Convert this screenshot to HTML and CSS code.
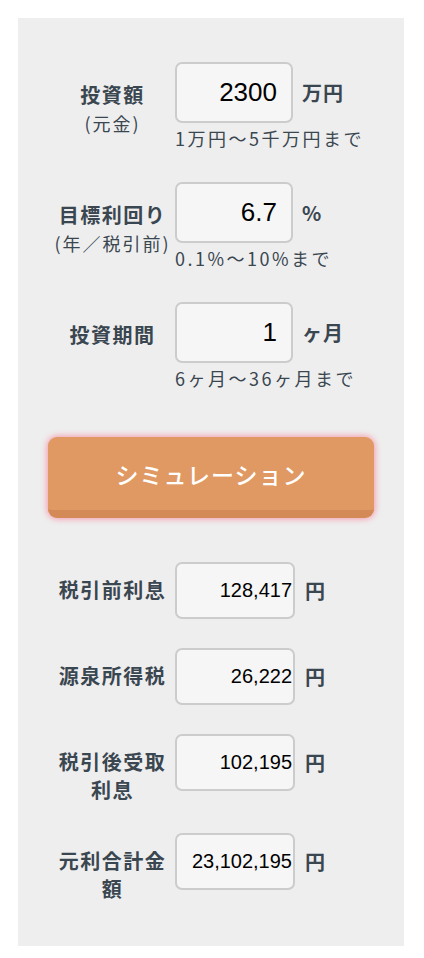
FILE: index.html
```html
<!DOCTYPE html>
<html lang="ja">
<head>
    <meta charset="UTF-8">
    <title>シミュレーション</title>
    <link rel="stylesheet" href="styles.css">
</head>
<body>
    <div id="panel">
        <div class="form-box">
            <div class="row">
                <div class="label">投資額<span class="sub">(元金)</span></div>
                <div class="field">
                    <div class="line">
                        <input class="num" type="text" value="2300">
                        <span class="unit">万円</span>
                    </div>
                    <p class="hint">1万円〜5千万円まで</p>
                </div>
            </div>
            <div class="row">
                <div class="label">目標利回り<span class="sub">(年／税引前)</span></div>
                <div class="field">
                    <div class="line">
                        <input class="num" type="text" value="6.7">
                        <span class="unit">%</span>
                    </div>
                    <p class="hint">0.1%〜10%まで</p>
                </div>
            </div>
            <div class="row">
                <div class="label">投資期間</div>
                <div class="field">
                    <div class="line">
                        <input class="num" type="text" value="1">
                        <span class="unit">ヶ月</span>
                    </div>
                    <p class="hint">6ヶ月〜36ヶ月まで</p>
                </div>
            </div>
        </div>

        <button id="btn-sim" type="button">シミュレーション</button>

        <div class="result-box">
            <div class="res-row">
                <div class="res-label">税引前利息</div>
                <input class="res-num" type="text" value="128,417" readonly>
                <span class="res-unit">円</span>
            </div>
            <div class="res-row">
                <div class="res-label">源泉所得税</div>
                <input class="res-num" type="text" value="26,222" readonly>
                <span class="res-unit">円</span>
            </div>
            <div class="res-row">
                <div class="res-label">税引後受取<br>利息</div>
                <input class="res-num" type="text" value="102,195" readonly>
                <span class="res-unit">円</span>
            </div>
            <div class="res-row">
                <div class="res-label">元利合計金<br>額</div>
                <input class="res-num" type="text" value="23,102,195" readonly>
                <span class="res-unit">円</span>
            </div>
        </div>
    </div>
</body>
</html>
```

FILE: styles.css
```css
*{
    margin: 0;
    padding: 0;
    box-sizing: border-box;
}
body{
    background: #fff;
    font-family: "Noto Sans CJK JP", "Liberation Sans", sans-serif;
    color: #3a4650;
}
#panel{
    width: 386px;
    margin: 18px 0 0 18px;
    background: #eeeeee;
    padding: 44px 0 43px 30px;
}
/* 入力エリア */
.form-box{
    display: flex;
    flex-direction: column;
    gap: 33px;
}
.row{
    display: flex;
    align-items: flex-start;
}
.label{
    width: 127px;
    padding-top: 19px;
    padding-left: 2px;
    text-align: center;
    font-size: 20px;
    font-weight: bold;
    line-height: 28px;
    letter-spacing: 1.5px;
    white-space: nowrap;
}
.label .sub{
    display: block;
    font-size: 18px;
    font-weight: normal;
    letter-spacing: 2px;
}
.line{
    display: flex;
    align-items: center;
}
.num{
    width: 118px;
    height: 61px;
    border: 2px solid #cccccc;
    border-radius: 7px;
    background: #f6f6f6;
    text-align: right;
    padding-right: 14px;
    font-family: "Liberation Sans", Arial, sans-serif;
    font-size: 26px;
    color: #000;
    outline: none;
}
.unit{
    margin-left: 9px;
    font-size: 20px;
    font-weight: bold;
    letter-spacing: 1px;
}
.hint{
    margin-top: 4px;
    font-size: 18px;
    line-height: 22px;
    letter-spacing: 2.5px;
    white-space: nowrap;
}
/* ボタン */
#btn-sim{
    display: block;
    width: 326px;
    height: 81px;
    margin-top: 48px;
    background: #e09963;
    border: none;
    border-bottom: 8px solid #d38a57;
    border-radius: 9px;
    box-shadow: 0 0 6px 1px #f59aac;
    color: #fff;
    font-family: "Noto Sans CJK JP", sans-serif;
    font-size: 23px;
    font-weight: 500;
    letter-spacing: 1px;
    cursor: pointer;
}
/* 結果エリア */
.result-box{
    margin-top: 44px;
    display: flex;
    flex-direction: column;
    gap: 29px;
}
.res-row{
    display: flex;
    align-items: flex-start;
}
.res-label{
    width: 127px;
    padding-top: 14px;
    padding-left: 2px;
    text-align: center;
    font-size: 20px;
    font-weight: bold;
    line-height: 28px;
    letter-spacing: 1.5px;
}
.res-num{
    width: 120px;
    height: 57px;
    border: 2px solid #cccccc;
    border-radius: 7px;
    background: #f6f6f6;
    text-align: right;
    padding-right: 1px;
    font-family: "Liberation Sans", Arial, sans-serif;
    font-size: 20px;
    color: #000;
    outline: none;
}
.res-unit{
    margin-left: 10px;
    font-size: 20px;
    font-weight: bold;
    line-height: 57px;
}
```
